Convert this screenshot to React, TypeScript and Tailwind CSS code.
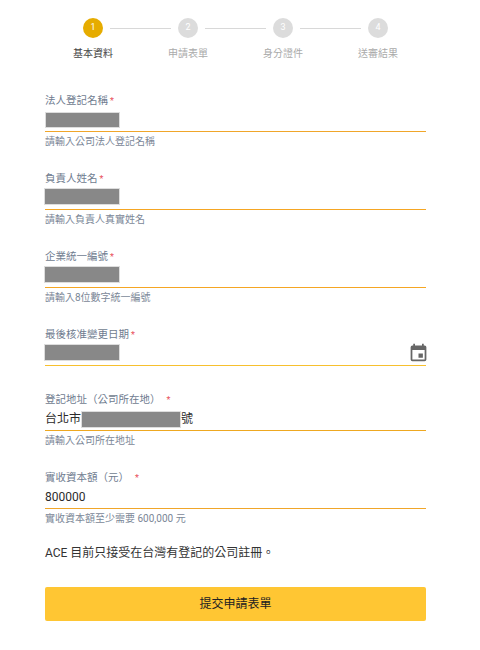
const steps = ['基本資料', '申請表單', '身分證件', '送審結果'];

const Field = ({ label, gap, hint, line, mb = 'mb-[21px]', children }: any) => (
  <div className={`flex flex-col ${mb}`}>
    <div className="h-[17px] text-[10.5px] leading-[17px] text-[#6f7c8f]">
      {label}
      <span className={`text-[#e8505b] text-[9px] ${gap ? 'ml-1.5' : 'ml-0.5'}`}>*</span>
    </div>
    <div className={`h-[23px] flex items-center justify-between border-b ${line} text-[12px] text-[#2b2b2b]`}>
      {children}
    </div>
    {hint && <div className="mt-[3px] h-[14px] text-[10px] leading-[14px] text-[#7b8797]">{hint}</div>}
  </div>
);

const Mask = ({ cls }: { cls: string }) => (
  <div className={`bg-[#888] border border-[#ddd] ${cls}`} />
);

export default function App() {
  return (
    <div className="w-[480px] h-[650px] bg-white overflow-hidden font-['Roboto','Noto_Sans_CJK_TC',sans-serif]">
      <div className="pt-[18px] pl-[45px] pr-[54px] flex flex-col">
        {/* stepper */}
        <div className="flex pl-[12px] h-[74px]">
          {steps.map((s, i) => (
            <div key={s} className="relative w-[72px] shrink-0 mr-[23px] flex flex-col items-center">
              <div className={`w-[20px] h-[20px] rounded-full flex items-center justify-center text-[9px] text-white ${i === 0 ? 'bg-[#e6ac00]' : 'bg-[#dcdcdc]'}`}>{i + 1}</div>
              <div className={`mt-[9px] text-[10px] leading-[14px] ${i === 0 ? 'text-[#444]' : 'text-[#aaa]'}`}>{s}</div>
              {i < 3 && <div className="absolute left-[53px] top-[10px] w-[61px] h-px bg-[#d8d8d8]" />}
            </div>
          ))}
        </div>
        <Field label="法人登記名稱" hint="請輸入公司法人登記名稱" line="border-[#f0a62a]"><Mask cls="w-[75px] h-[16px]" /></Field>
        <Field label="負責人姓名" hint="請輸入負責人真實姓名" line="border-[#f5a623]"><Mask cls="w-[76px] h-[17px] mb-[4px] -ml-px" /></Field>
        <Field label="企業統一編號" hint="請輸入8位數字統一編號" line="border-[#f5a623]"><Mask cls="w-[76px] h-[17px] mb-[3px] -ml-px" /></Field>
        <Field label="最後核准變更日期" line="border-[#f7c02e]" mb="mb-[25px]">
          <Mask cls="w-[76px] h-[17px] mb-[3px] -ml-px" />
          <svg className="w-[21px] h-[21px] -mr-[3px] mb-[3px]" viewBox="0 0 24 24" fill="#666"><path d="M19 4h-1V2h-2v2H8V2H6v2H5a2 2 0 0 0-2 2v14a2 2 0 0 0 2 2h14a2 2 0 0 0 2-2V6a2 2 0 0 0-2-2zm0 16H5V9h14v11zM12 13h5v5h-5z" /></svg>
        </Field>
        <Field label="登記地址（公司所在地）" gap hint="請輸入公司所在地址" line="border-[#eea821]">
          <span className="flex items-center">台北市<Mask cls="w-[100px] h-[17px]" />號</span>
        </Field>
        <Field label="實收資本額（元）" gap hint="實收資本額至少需要 600,000 元" line="border-[#f0a62a]" mb="mb-[18px]">800000</Field>
        <div className="text-[12px] leading-[18px] text-[#333]">ACE 目前只接受在台灣有登記的公司註冊。</div>
        <button className="mt-[25px] h-[34px] rounded-[2px] bg-[#ffc633] text-[12px] text-[#222]">提交申請表單</button>
      </div>
    </div>
  );
}
